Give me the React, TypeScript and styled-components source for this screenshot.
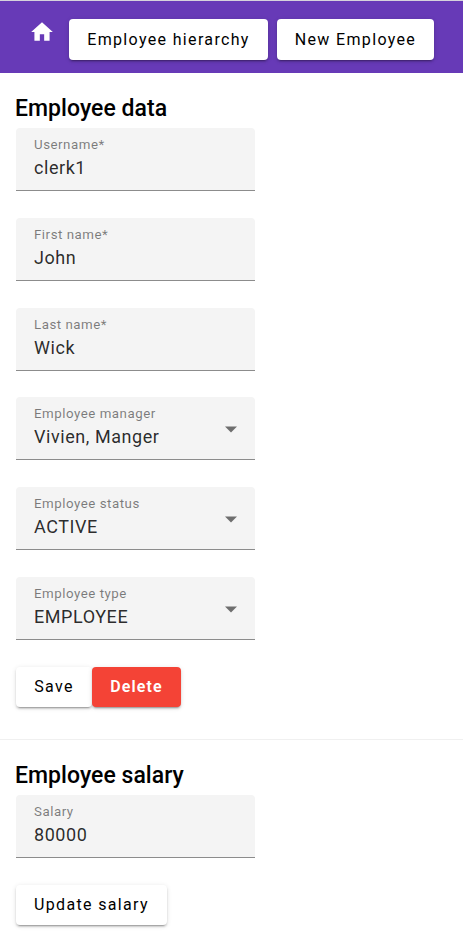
import React from "react";
import styled, { createGlobalStyle } from "styled-components";

const GlobalStyle = createGlobalStyle`
  * { box-sizing: border-box; }
  body { margin: 0; background: #fff; font-family: Roboto, "Liberation Sans", sans-serif; color: #000; }
`;

const Page = styled.div`
  width: 100%;
  height: 937px;
  overflow: hidden;
`;

const Toolbar = styled.header`
  height: 73px;
  padding: 18px 0 0 29px;
  display: flex;
  align-items: flex-start;
  background: #673ab7;
  border-top: 1px solid #d5d3dc;
`;

const HomeLink = styled.a`
  width: 26px;
  height: 26px;
  margin-right: 14px;
  color: #fff;
  svg { display: block; width: 26px; height: 26px; fill: currentColor; }
`;

const Button = styled.button<{ $warn?: boolean; $tall?: boolean; $width: number }>`
  width: ${(p) => p.$width}px;
  height: ${(p) => (p.$tall ? 41 : 40)}px;
  padding: ${(p) => (p.$tall ? "0" : "1px 0")};
  border: 0;
  border-radius: 4px;
  font-family: Roboto, "Liberation Sans", sans-serif;
  font-size: 16px;
  font-weight: ${(p) => (p.$warn ? 600 : 450)};
  line-height: ${(p) => (p.$tall ? 41 : 38)}px;
  letter-spacing: ${(p) => (p.$warn ? 1.15 : 1.34)}px;
  text-align: center;
  white-space: nowrap;
  color: ${(p) => (p.$warn ? "#fff" : "#000")};
  background: ${(p) => (p.$warn ? "#f44336" : "#fff")};
  box-shadow: 0 3px 1px -2px rgba(0, 0, 0, 0.2), 0 2px 2px rgba(0, 0, 0, 0.14), 0 1px 5px rgba(0, 0, 0, 0.12);
`;

const Nav = styled.nav`
  display: flex;
  gap: 9px;
`;

const Section = styled.section<{ $top: number }>`
  padding: ${(p) => p.$top}px 0 0 16px;
`;

const Title = styled.h2`
  margin: 0 0 3px -1px;
  font-size: 23px;
  line-height: 32px;
  font-weight: 460;
  letter-spacing: 0.04px;
`;

const Field = styled.div<{ $gap?: number }>`
  position: relative;
  width: 239px;
  height: 63px;
  margin-bottom: ${(p) => p.$gap ?? 27}px;
  padding: 8px 18px 0;
  background: #f4f4f4;
  border-bottom: 1px solid #8c8c8c;
  border-radius: 4px 4px 0 0;
`;

const Label = styled.div`
  font-size: 13.3px;
  line-height: 18px;
  letter-spacing: 0.52px;
  color: rgba(0, 0, 0, 0.5);
`;

const Value = styled.div`
  font-size: 18px;
  font-weight: 370;
  line-height: 27px;
  letter-spacing: 0.56px;
  color: rgba(0, 0, 0, 0.84);
`;

const Arrow = styled.svg`
  position: absolute;
  right: 18px;
  top: 29px;
  width: 12px;
  height: 7px;
  fill: #6e6e6e;
`;

const Actions = styled.div`
  display: flex;
`;

const Divider = styled.hr`
  height: 1px;
  margin: 32px 0 0;
  border: 0;
  background: #f0f0f0;
`;

const fields = [
  { label: "Username*", value: "clerk1" },
  { label: "First name*", value: "John" },
  { label: "Last name*", value: "Wick", gap: 26 },
  { label: "Employee manager", value: "Vivien, Manger", select: true },
  { label: "Employee status", value: "ACTIVE", select: true },
  { label: "Employee type", value: "EMPLOYEE", select: true },
];

export default function App() {
  return (
    <Page>
      <GlobalStyle />
      <Toolbar>
        <HomeLink aria-label="Home">
          <svg viewBox="0 0 24 24"><path d="M10 20v-6h4v6h5v-8h3L12 3 2 12h3v8z" /></svg>
        </HomeLink>
        <Nav>
          <Button $tall $width={199}>Employee hierarchy</Button>
          <Button $tall $width={157}>New Employee</Button>
        </Nav>
      </Toolbar>
      <Section $top={20}>
        <Title>Employee data</Title>
        {fields.map((f) => (
          <Field key={f.label} $gap={f.gap}>
            <Label>{f.label}</Label>
            <Value>{f.value}</Value>
            {f.select && <Arrow viewBox="0 0 12 7"><path d="M0 .6h12L6 6.4z" /></Arrow>}
          </Field>
        ))}
        <Actions>
          <Button $width={76}>Save</Button>
          <Button $width={89} $warn>Delete</Button>
        </Actions>
      </Section>
      <Divider />
      <Section $top={20}>
        <Title>Employee salary</Title>
        <Field>
          <Label>Salary</Label>
          <Value>80000</Value>
        </Field>
        <Button $width={151}>Update salary</Button>
      </Section>
    </Page>
  );
}
